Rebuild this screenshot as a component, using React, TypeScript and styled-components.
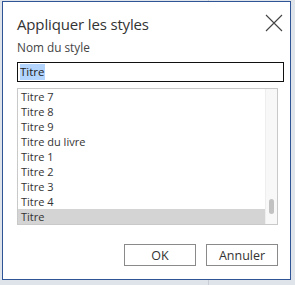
import React, { useState } from 'react'
import styled, { createGlobalStyle } from 'styled-components'

const GlobalStyle = createGlobalStyle`
  html, body {
    margin: 0;
    padding: 0;
  }
  body {
    width: 295px;
    height: 285px;
    overflow: hidden;
    background: linear-gradient(to right, transparent 208px, #c9ced6 208px, #c9ced6 209px, transparent 209px), #dfe3ea;
    font-family: 'Open Sans', 'Noto Sans', sans-serif;
  }
`

const Dialog = styled.div`
  box-sizing: border-box;
  margin: 1px 0 0 2px;
  width: 289px;
  height: 279px;
  background: #fff;
  border: 1px solid #2f5597;
  padding: 0 12px 0 14px;
  display: flex;
  flex-direction: column;
`

const Header = styled.div`
  display: flex;
  align-items: center;
  justify-content: space-between;
  height: 23px;
  padding-top: 9px;
`

const Title = styled.h1`
  margin: 2px 0 0;
  font-size: 15px;
  letter-spacing: -0.15px;
  font-weight: 400;
  color: #333;
`

const CloseButton = styled.button`
  border: 0;
  background: none;
  padding: 0;
  width: 19px;
  height: 19px;
  margin-right: -5px;
  display: flex;
  align-items: center;
  justify-content: center;
  cursor: pointer;
`

const Label = styled.div`
  font-size: 11.8px;
  line-height: 22px;
  color: #444;
  margin: 2px 0 4px;
`

const NameInput = styled.div`
  box-sizing: border-box;
  width: 267px;
  height: 20px;
  border: 1.5px solid #111;
  font-size: 11.5px;
  color: #222;
  padding: 0 2px;
  display: flex;
  align-items: center;
`

const Selected = styled.span`
  background: #b3d4fc;
  line-height: 16px;
`

const ListBox = styled.div`
  box-sizing: border-box;
  margin-top: 6px;
  width: 261px;
  height: 137px;
  border: 1px solid #c9c9c9;
  display: flex;
  overflow: hidden;
`

const Items = styled.div`
  flex: 1;
  display: flex;
  flex-direction: column;
`

const Item = styled.div<{ $active?: boolean }>`
  height: 15px;
  line-height: 15px;
  font-size: 11px;
  color: #333;
  padding-left: 3px;
  background: ${(p) => (p.$active ? '#d4d4d4' : 'transparent')};
`

const ScrollTrack = styled.div`
  width: 11px;
  background: #f8f8f8;
  border-left: 1px solid #eee;
  position: relative;
`

const ScrollThumb = styled.div`
  position: absolute;
  left: 3px;
  bottom: 10px;
  width: 5px;
  height: 15px;
  border-radius: 3px;
  background: #c2c2c2;
`

const Footer = styled.div`
  display: flex;
  justify-content: flex-end;
  gap: 10px;
  width: 261px;
  margin-top: 19px;
`

const Btn = styled.button`
  box-sizing: border-box;
  width: 72px;
  height: 22px;
  border: 1px solid #8a8a8a;
  background: #fff;
  font-family: inherit;
  font-size: 12.5px;
  color: #333;
  padding: 0;
`

const styles = ['Titre 7', 'Titre 8', 'Titre 9', 'Titre du livre', 'Titre 1', 'Titre 2', 'Titre 3', 'Titre 4', 'Titre']

export default function App() {
  const [active, setActive] = useState('Titre')
  return (
    <>
      <GlobalStyle />
      <Dialog>
        <Header>
          <Title>Appliquer les styles</Title>
          <CloseButton aria-label="Fermer">
            <svg width="18" height="18" viewBox="0 0 18 18">
              <path d="M1 1 L17 17 M17 1 L1 17" stroke="#444" strokeWidth="1.1" fill="none" />
            </svg>
          </CloseButton>
        </Header>
        <Label>Nom du style</Label>
        <NameInput>
          <Selected>{active}</Selected>
        </NameInput>
        <ListBox>
          <Items>
            {styles.map((s) => (
              <Item key={s} $active={s === active} onClick={() => setActive(s)}>
                {s}
              </Item>
            ))}
          </Items>
          <ScrollTrack>
            <ScrollThumb />
          </ScrollTrack>
        </ListBox>
        <Footer>
          <Btn>OK</Btn>
          <Btn>Annuler</Btn>
        </Footer>
      </Dialog>
    </>
  )
}
